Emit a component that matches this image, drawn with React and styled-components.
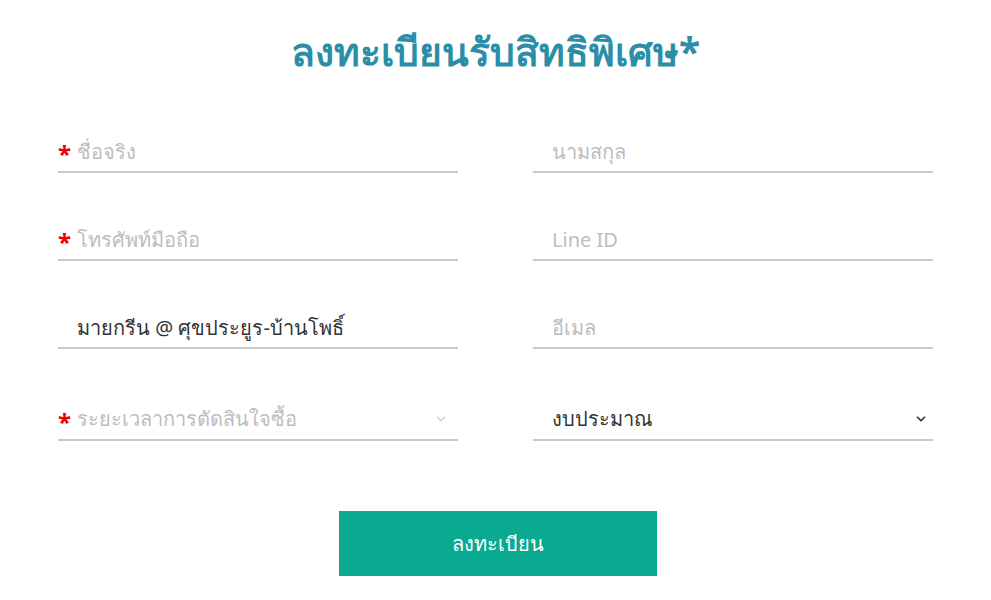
import React from 'react';
import styled, { createGlobalStyle } from 'styled-components';

const GlobalStyle = createGlobalStyle`
  body {
    margin: 0;
    background: #fff;
    font-family: "Noto Sans", "Open Sans", "DejaVu Sans", sans-serif;
  }
`;

const Wrapper = styled.div`
  width: 875px;
  margin: 0 auto;
  padding-top: 26px;
`;

const Title = styled.h1`
  margin: 0 0 47px;
  text-align: center;
  font-size: 39px;
  font-weight: 700;
  line-height: 50px;
  color: #2b8ea8;
`;

const Grid = styled.div`
  display: grid;
  grid-template-columns: 400px 400px;
  column-gap: 75px;
  row-gap: 38px;
`;

const Field = styled.label`
  display: flex;
  align-items: center;
  height: ${({ $select }) => ($select ? '54px' : '50px')};
  padding-top: ${({ $select }) => ($select ? '12px' : '9px')};
  border-bottom: 2px solid #c8c8c8;
  padding-left: ${({ $required }) => ($required ? '0' : '19px')};
  box-sizing: border-box;
  font-size: 20px;
`;

const Star = styled.span`
  color: #e00;
  font-size: 24px;
  font-weight: 700;
  width: 19px;
  flex: none;
  line-height: 1;
  margin-top: 5px;
`;

const Text = styled.span`
  flex: 1;
  color: ${({ $filled }) => ($filled ? '#333' : '#bdbdbd')};
`;

const Chevron = styled.svg`
  width: 14px;
  height: 14px;
  margin-right: ${({ $muted }) => ($muted ? '10px' : '5px')};
  color: ${({ $muted }) => ($muted ? '#c8c8c8' : '#333')};
`;

const Actions = styled.div`
  display: flex;
  justify-content: center;
  margin-top: 70px;
  padding-left: 5px;
`;

const Button = styled.button`
  width: 318px;
  height: 65px;
  border: 0;
  background: #0aaa91;
  color: #fff;
  font-family: inherit;
  font-size: 20px;
  font-weight: 500;
  cursor: pointer;
`;

const ChevronDown = ({ muted }) => (
  <Chevron $muted={muted} viewBox="0 0 24 24" fill="none" stroke="currentColor" strokeWidth={muted ? 2 : 3} strokeLinecap="round" strokeLinejoin="round">
    <path d="M6 9l6 6 6-6" />
  </Chevron>
);

const fields = [
  { label: 'ชื่อจริง', required: true },
  { label: 'นามสกุล' },
  { label: 'โทรศัพท์มือถือ', required: true },
  { label: 'Line ID' },
  { label: 'มายกรีน @ ศุขประยูร-บ้านโพธิ์', filled: true },
  { label: 'อีเมล' },
  { label: 'ระยะเวลาการตัดสินใจซื้อ', required: true, select: true, muted: true },
  { label: 'งบประมาณ', filled: true, select: true },
];

const App = () => {
  return (
    <>
      <GlobalStyle />
      <Wrapper>
        <Title>ลงทะเบียนรับสิทธิพิเศษ*</Title>
        <Grid>
          {fields.map((f, i) => (
            <Field key={i} $required={f.required} $select={f.select}>
              {f.required && <Star>*</Star>}
              <Text $filled={f.filled}>{f.label}</Text>
              {f.select && <ChevronDown muted={f.muted} />}
            </Field>
          ))}
        </Grid>
        <Actions>
          <Button type="button">ลงทะเบียน</Button>
        </Actions>
      </Wrapper>
    </>
  );
};

export default App;
